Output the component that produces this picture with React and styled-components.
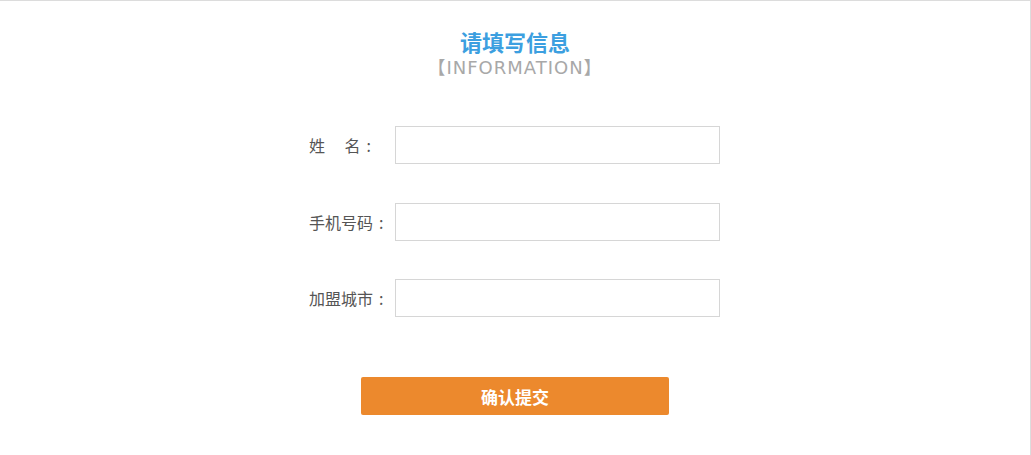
import styled, { createGlobalStyle } from "styled-components";

const GlobalStyle = createGlobalStyle`
  body {
    margin: 0;
    background: #fff;
    font-family: "Noto Sans CJK SC", "Liberation Sans", sans-serif;
  }
`;

const Panel = styled.div`
  box-sizing: border-box;
  width: 1031px;
  height: 455px;
  border-top: 1px solid #dcdcdc;
  border-right: 1px solid #dcdcdc;
  padding-top: 27px;
  display: flex;
  flex-direction: column;
  align-items: center;
`;

const Title = styled.h2`
  margin: 0;
  font-size: 22px;
  line-height: 26px;
  font-weight: 700;
  color: #3c9fe0;
`;

const SubTitle = styled.div`
  font-family: "DejaVu Sans", "Noto Sans CJK SC", sans-serif;
  font-size: 18px;
  letter-spacing: 1px;
  line-height: 22px;
  color: #a8a8a8;
  margin-top: 3px;
`;

const Form = styled.form`
  margin-top: 47px;
  display: flex;
  flex-direction: column;
  align-items: center;
  gap: 38.5px;
`;

const Row = styled.label`
  display: flex;
  align-items: center;
  margin-left: -1px;
`;

const LabelText = styled.span`
  width: 86px;
  display: flex;
  align-items: center;
  font-size: 16px;
  color: #555;
  white-space: pre;
`;

const Colon = styled.span`
  margin-left: 6px;
`;

const Input = styled.input`
  box-sizing: border-box;
  width: 325px;
  height: 38px;
  border: 1px solid #d6d6d6;
  outline: none;
  padding: 0 10px;
  font-size: 14px;
  font-family: inherit;
`;

const SubmitButton = styled.button`
  margin-top: 21.5px;
  width: 308px;
  height: 38px;
  border: none;
  border-radius: 2px;
  background: #ec892d;
  color: #fff;
  font-family: inherit;
  font-size: 17px;
  font-weight: 700;
  cursor: pointer;
`;

const fields = [
  { label: "姓\u3000 名", name: "name" },
  { label: "手机号码", name: "phone" },
  { label: "加盟城市", name: "city" },
];

export default function App() {
  return (
    <>
      <GlobalStyle />
      <Panel>
        <Title>请填写信息</Title>
        <SubTitle>【INFORMATION】</SubTitle>
        <Form onSubmit={(e) => e.preventDefault()}>
          {fields.map((f) => (
            <Row key={f.name}>
              <LabelText>
                {f.label}
                <Colon>:</Colon>
              </LabelText>
              <Input name={f.name} type="text" />
            </Row>
          ))}
          <SubmitButton type="submit">确认提交</SubmitButton>
        </Form>
      </Panel>
    </>
  );
}
